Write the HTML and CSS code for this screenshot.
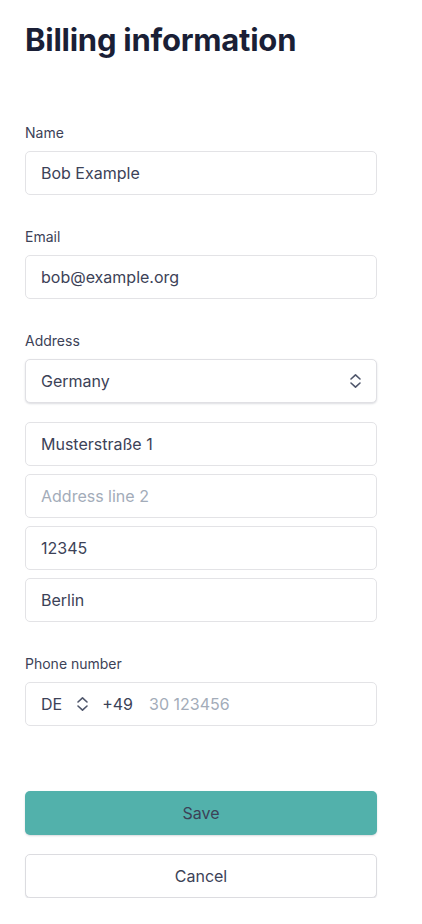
FILE: index.html
```html
<!DOCTYPE html>
<html>
<head>
<meta charset="utf-8">
<link rel="stylesheet" href="styles.css">
</head>
<body>
<main class="page">
  <h1 class="title">Billing information</h1>
  <form class="form">
    <div class="field">
      <label class="label">Name</label>
      <div class="input">Bob Example</div>
    </div>
    <div class="field">
      <label class="label">Email</label>
      <div class="input">bob@example.org</div>
    </div>
    <div class="field">
      <label class="label">Address</label>
      <div class="stack">
        <div class="input select">
          <span>Germany</span>
          <svg class="chev" width="13" height="16" viewBox="0 0 13 16"><path d="M2 6 L6.5 1.8 L11 6 M2 10 L6.5 14.2 L11 10" fill="none" stroke="#4f566b" stroke-width="1.6" stroke-linecap="round" stroke-linejoin="round"/></svg>
        </div>
        <div class="input">Musterstraße 1</div>
        <div class="input placeholder">Address line 2</div>
        <div class="input">12345</div>
        <div class="input">Berlin</div>
      </div>
    </div>
    <div class="field">
      <label class="label">Phone number</label>
      <div class="input phone">
        <span class="cc">DE</span>
        <svg class="chev" width="13" height="16" viewBox="0 0 13 16"><path d="M2 6 L6.5 1.8 L11 6 M2 10 L6.5 14.2 L11 10" fill="none" stroke="#4f566b" stroke-width="1.6" stroke-linecap="round" stroke-linejoin="round"/></svg>
        <span class="prefix">+49</span>
        <span class="placeholder">30 123456</span>
      </div>
    </div>
    <div class="actions">
      <button type="button" class="btn primary">Save</button>
      <button type="button" class="btn secondary">Cancel</button>
    </div>
  </form>
</main>
</body>
</html>
```
FILE: styles.css
```css
* { box-sizing: border-box; }
body {
  margin: 0;
  background: #ffffff;
  font-family: Inter, "Noto Sans", "Liberation Sans", sans-serif;
  color: #3c4257;
}
.page {
  padding: 22px 45px 0 25px;
  width: 422px;
}
.title {
  margin: 0;
  font-size: 31px;
  line-height: 36px;
  font-weight: 700;
  color: #1a1f36;
  letter-spacing: -0.25px;
}
.form {
  display: flex;
  flex-direction: column;
  margin-top: 65px;
}
.field {
  display: flex;
  flex-direction: column;
  margin-bottom: 32px;
}
.label {
  font-size: 14px;
  line-height: 20px;
  color: #3c4257;
  margin-bottom: 8px;
}
.stack {
  display: flex;
  flex-direction: column;
  gap: 8px;
}
.input {
  height: 44px;
  border: 1px solid #e3e3e6;
  border-radius: 5px;
  padding: 0 15px;
  display: flex;
  align-items: center;
  font-size: 16px;
  color: #3c4257;
  background: #fff;
}
.placeholder { color: #a3acb9; }
.select {
  justify-content: space-between;
  border-color: #e0e0e4;
  box-shadow: 0 1px 2px rgba(60, 66, 87, 0.18);
  margin-bottom: 11px;
}
.select .chev { margin-right: -1px; }
.phone .cc { margin-right: 14px; }
.phone .chev { margin-right: 13px; }
.phone .prefix { margin-right: 16px; }
.actions {
  display: flex;
  flex-direction: column;
  gap: 19px;
  margin-top: 33px;
}
.btn {
  height: 44px;
  width: 100%;
  border-radius: 5px;
  font-family: inherit;
  font-size: 16px;
  color: #3c4257;
  cursor: pointer;
}
.primary {
  background: #52b1ab;
  border: none;
  box-shadow: 0 1px 2px rgba(60, 66, 87, 0.2);
}
.secondary {
  background: #fff;
  border: 1px solid #dcdce0;
  box-shadow: 0 1px 1px rgba(60, 66, 87, 0.15);
}
```
